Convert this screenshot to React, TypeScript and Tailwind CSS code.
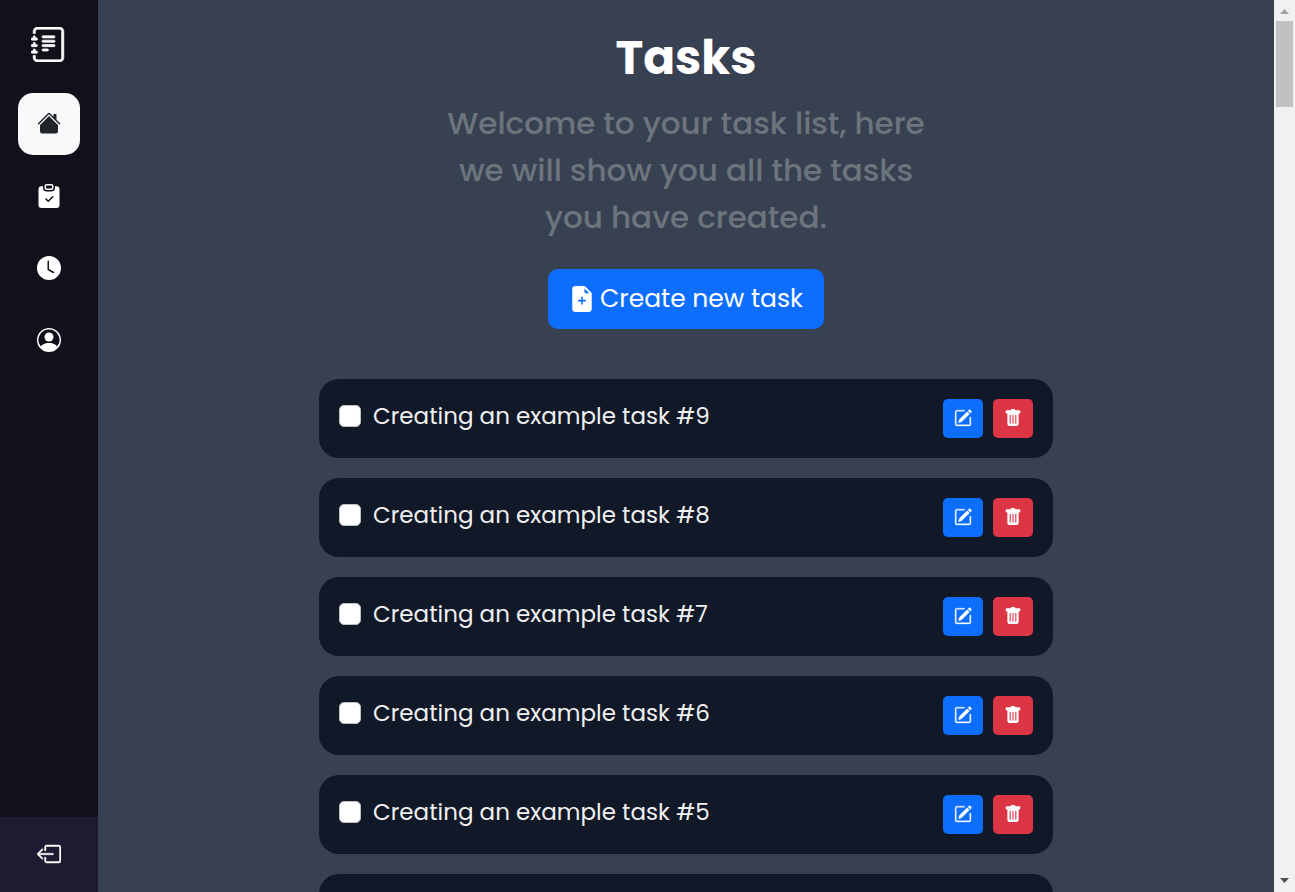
import {
  BsBoxArrowLeft,
  BsClipboardCheckFill,
  BsClockFill,
  BsFileEarmarkPlusFill,
  BsHouseFill,
  BsJournalText,
  BsPencilSquare,
  BsPersonCircle,
  BsTrashFill,
} from "react-icons/bs";

const links = [
  { label: "Home", href: "#home", Icon: BsHouseFill, active: true },
  { label: "Tasks", href: "#tasks", Icon: BsClipboardCheckFill, active: false },
  { label: "History", href: "#history", Icon: BsClockFill, active: false },
  { label: "Profile", href: "#profile", Icon: BsPersonCircle, active: false },
];

const tasks = [9, 8, 7, 6, 5, 4].map((id) => ({
  id,
  title: `Creating an example task #${id}`,
}));

function Sidebar() {
  return (
    <aside className="flex w-[98px] shrink-0 flex-col items-center bg-[#11111b] text-white">
      <a href="#home" aria-label="Task journal" className="mt-[27px] mr-px mb-[31px]">
        <BsJournalText size={35} className="stroke-current [stroke-width:0.3]" />
      </a>
      <nav className="flex flex-col gap-[10px]">
        {links.map(({ label, href, Icon, active }) => (
          <a
            key={label}
            href={href}
            aria-label={label}
            className={
              active
                ? "flex size-[62px] items-center justify-center rounded-[15px] bg-[#f8f9fa] pb-0.5 text-[#212529]"
                : "flex size-[62px] items-center justify-center rounded-[15px] text-white"
            }
          >
            <Icon size={24} />
          </a>
        ))}
      </nav>
      <button
        type="button"
        aria-label="Log out"
        className="mt-auto flex h-[75px] w-full items-center justify-center bg-[#1d1b31] pb-0.5"
      >
        <BsBoxArrowLeft size={24} className="stroke-current [stroke-width:0.3]" />
      </button>
    </aside>
  );
}

function TaskCard({ id, title }: { id: number; title: string }) {
  const inputId = `task-${id}`;
  return (
    <li className="flex items-start justify-between rounded-[20px] bg-[#111827] p-5">
      <div className="flex items-center gap-3">
        <input
          id={inputId}
          type="checkbox"
          className="size-[22px] appearance-none rounded-[5px] border border-[#bfbfbf] bg-white checked:bg-[#0d6efd]"
        />
        <label htmlFor={inputId} className="text-[23px] leading-[34px] text-[#f0f0f0]">
          {title}
        </label>
      </div>
      <div className="flex gap-[10px]">
        <button
          type="button"
          aria-label={`Edit task ${id}`}
          className="flex h-[39px] w-10 items-center justify-center rounded-[5px] bg-[#0d6efd] pb-0.5 text-white"
        >
          <BsPencilSquare size={18} className="stroke-current [stroke-width:0.3]" />
        </button>
        <button
          type="button"
          aria-label={`Delete task ${id}`}
          className="flex h-[39px] w-10 items-center justify-center rounded-[5px] bg-[#dc3545] pb-0.5 text-white"
        >
          <BsTrashFill size={18} />
        </button>
      </div>
    </li>
  );
}

function ScrollTrack() {
  return (
    <div aria-hidden="true" className="flex w-[21px] shrink-0 flex-col items-center bg-[#f1f1f1]">
      <svg width="21" height="21" viewBox="0 0 21 21" fill="#a3a3a3">
        <path d="M6 14h9l-4.5-5z" />
      </svg>
      <div className="h-[86px] w-[17px] bg-[#c1c1c1]" />
      <svg className="mt-auto" width="21" height="21" viewBox="0 0 21 21" fill="#505050">
        <path d="M6 7h9l-4.5 5z" />
      </svg>
    </div>
  );
}

export default function App() {
  return (
    <div className="flex h-screen overflow-hidden bg-[#384152] font-['Poppins','Inter',sans-serif]">
      <Sidebar />
      <main className="flex min-w-0 flex-1 flex-col items-center overflow-y-auto pt-7 [scrollbar-width:none]">
        <h1 className="text-[47px] leading-[60px] font-bold text-white">Tasks</h1>
        <p className="mt-3 max-w-[500px] text-center text-[31px] leading-[47px] font-medium text-[#6c757d]">
          Welcome to your task list, here we will show you all the tasks you have created.
        </p>
        <button
          type="button"
          className="mt-7 flex h-[60px] shrink-0 items-center gap-[5px] rounded-[10px] bg-[#0d6efd] px-[21px] text-[25px] text-white"
        >
          <BsFileEarmarkPlusFill size={26} />
          Create new task
        </button>
        <ul className="mt-[50px] flex w-full max-w-[734px] flex-col gap-5 pb-5">
          {tasks.map((task) => (
            <TaskCard key={task.id} id={task.id} title={task.title} />
          ))}
        </ul>
      </main>
      <ScrollTrack />
    </div>
  );
}
